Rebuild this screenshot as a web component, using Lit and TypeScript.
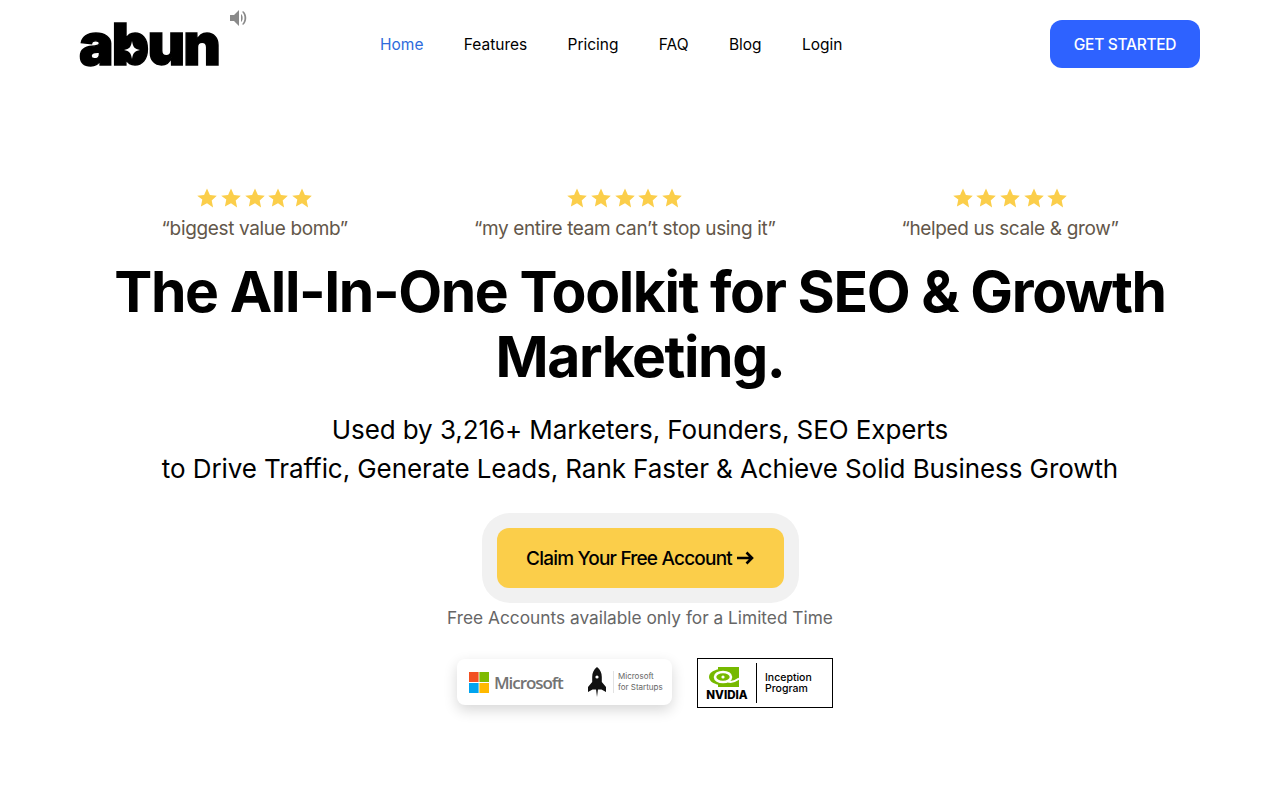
import { LitElement, css, html, svg } from 'lit';
import { customElement } from 'lit/decorators.js';

const quotes = ['“biggest value bomb”', '“my entire team can’t stop using it”', '“helped us scale & grow”'];
const links = ['Home', 'Features', 'Pricing', 'FAQ', 'Blog', 'Login'];

const star = svg`<path d="M10 .6l2.9 6.4 6.9.8-5.1 4.7 1.4 6.9L10 15.2l-6.1 3.2 1.4-6.9L.2 7.8l6.9-.8z"/>`;

@customElement('app-root')
export class AppRoot extends LitElement {
  static override styles = css`
    :host {
      display: block;
      height: 800px;
      overflow: hidden;
      background: #fff;
      font-family: 'Inter', sans-serif;
      color: #000;
    }

    .header {
      height: 88px;
      padding: 0 80px;
      display: flex;
      align-items: center;
      box-sizing: border-box;
    }

    .logo {
      width: 300px;
      height: 88px;
      position: relative;
      display: flex;
    }

    .logo-text {
      font-weight: 900;
      font-size: 58px;
      line-height: 88px;
      letter-spacing: -1.8px;
      margin-left: -1px;
      -webkit-text-stroke: 1.4px #000;
      color: #000;
    }

    .counter {
      position: absolute;
      left: 38px;
      top: 36px;
      width: 28px;
      height: 28px;
    }

    .sound {
      position: absolute;
      left: 149px;
      top: 8px;
      width: 20px;
      height: 20px;
      fill: #8a8a8a;
    }

    .nav {
      display: flex;
      gap: 40.3px;
      font-size: 15.5px;
    }

    .nav a.active {
      color: #2e6bdc;
    }

    .cta {
      margin-left: auto;
      width: 150px;
      height: 48px;
      border-radius: 12px;
      background: #2e62ff;
      color: #fff;
      font-size: 15.5px;
      font-weight: 500;
      letter-spacing: -0.3px;
      display: flex;
      align-items: center;
      justify-content: center;
    }

    .hero {
      display: flex;
      flex-direction: column;
      align-items: center;
      padding-top: 100px;
    }

    .quotes {
      display: flex;
      justify-content: center;
      gap: 126px;
    }

    .quote {
      display: flex;
      flex-direction: column;
      align-items: center;
      gap: 9px;
      font-size: 19px;
      line-height: 24px;
      letter-spacing: -0.35px;
      color: #63574a;
    }

    .stars {
      display: flex;
      gap: 3.7px;
      height: 20px;
    }

    .stars svg {
      width: 20px;
      height: 20px;
      fill: #fbce4a;
    }

    h1 {
      margin: 18px 0 0;
      font-size: 57px;
      line-height: 65px;
      font-weight: 700;
      letter-spacing: -1.4px;
      text-align: center;
      width: 1120px;
    }

    .sub {
      margin: 21px 0 0;
      font-size: 26px;
      line-height: 39px;
      letter-spacing: -0.08px;
      text-align: center;
    }

    .claim-wrap {
      margin-top: 25px;
      padding: 15px;
      border-radius: 28px;
      background: #f1f1f1;
    }

    .claim {
      width: 287px;
      height: 60px;
      border-radius: 12px;
      background: #fbce4a;
      display: flex;
      align-items: center;
      justify-content: center;
      gap: 5px;
      font-size: 19px;
      font-weight: 500;
      letter-spacing: -0.8px;
    }

    .limited {
      margin-top: 3px;
      font-size: 17.3px;
      line-height: 24px;
      color: #666;
    }

    .badges {
      margin: 28px 0 0 10px;
      display: flex;
      align-items: center;
      gap: 25px;
    }

    .ms {
      width: 215px;
      height: 46px;
      margin-bottom: 2px;
      border-radius: 8px;
      background: #fff;
      box-shadow: 0 5px 14px rgba(0, 0, 0, 0.16);
      display: flex;
      align-items: center;
      padding-left: 12px;
      box-sizing: border-box;
    }

    .ms-name {
      margin-left: 5px;
      width: 69px;
      font-size: 17px;
      font-weight: 600;
      color: #737373;
      letter-spacing: -1.05px;
      font-family: 'Open Sans', sans-serif;
    }

    .ms-sub {
      font-size: 8px;
      line-height: 11px;
      color: #666;
      margin-left: 7px;
      padding-left: 4px;
      border-left: 1px solid #e2e2e2;
      white-space: nowrap;
    }

    .rocket {
      margin-left: 25px;
    }

    .nvidia {
      width: 136px;
      height: 50px;
      border: 1px solid #000;
      box-sizing: border-box;
      display: flex;
      align-items: center;
    }

    .nv-mark {
      width: 58px;
      padding-top: 2px;
      display: flex;
      flex-direction: column;
      align-items: center;
      gap: 3px;
    }

    .nv-logo {
      margin-right: 6px;
    }

    .nv-name {
      font-size: 11.5px;
      line-height: 11px;
      font-weight: 800;
    }

    .nv-line {
      width: 1px;
      height: 40px;
      background: #000;
    }

    .nv-text {
      margin-left: 8px;
      font-size: 10.5px;
      line-height: 11px;
      font-weight: 500;
    }
  `;

  override render() {
    return html`
      <div class="header">
        <div class="logo">
          <span class="logo-text">abun</span>
          <svg class="counter" viewBox="0 0 28 28">
            <circle cx="14" cy="14" r="12" fill="#000" />
            <path d="M14 5c1 6 2.500 8 8 9-5.500 1-7 3-8 9-1-6-2.500-8-8-9 5.500-1 7-3 8-9z" fill="#fff" />
          </svg>
          <svg class="sound" viewBox="0 0 20 20">
            <path d="M1 7h4l5-5v16l-5-5H1z" />
            <path d="M12 6c2.200 1.800 2.200 6.200 0 8z" />
            <path d="M14 3c4.400 3 4.400 11 0 14l-.8-1c3-3 3-9 0-12z" />
          </svg>
        </div>
        <div class="nav">
          ${links.map((l, i) => html`<a class=${i === 0 ? 'active' : ''}>${l}</a>`)}
        </div>
        <div class="cta">GET STARTED</div>
      </div>

      <div class="hero">
        <div class="quotes">
          ${quotes.map(
            (q) => html`
              <div class="quote">
                <div class="stars">
                  ${[0, 1, 2, 3, 4].map(() => html`<svg viewBox="0 0 20 20">${star}</svg>`)}
                </div>
                <div>${q}</div>
              </div>
            `
          )}
        </div>
        <h1>The All-In-One Toolkit for SEO &amp; Growth Marketing.</h1>
        <p class="sub">
          Used by 3,216+ Marketers, Founders, SEO Experts<br />
          to Drive Traffic, Generate Leads, Rank Faster &amp; Achieve Solid Business Growth
        </p>
        <div class="claim-wrap">
          <div class="claim">
            Claim Your Free Account
            <svg width="17" height="14" viewBox="0 0 17 14" fill="none" stroke="#000" stroke-width="2.6">
              <path d="M0 7h15M9.500 1.500L15 7l-5.500 5.500" />
            </svg>
          </div>
        </div>
        <div class="limited">Free Accounts available only for a Limited Time</div>
        <div class="badges">
          <div class="ms">
            <svg width="20" height="21" viewBox="0 0 20 21">
              <rect width="9.600" height="10" fill="#f25022" />
              <rect x="10.400" width="9.600" height="10" fill="#7fba00" />
              <rect y="11" width="9.600" height="10" fill="#00a4ef" />
              <rect x="10.400" y="11" width="9.600" height="10" fill="#ffb900" />
            </svg>
            <span class="ms-name">Microsoft</span>
            <svg class="rocket" width="18" height="30" viewBox="0 0 18 30">
              <path d="M9 0c3.300 2.500 4.800 6 4.800 10v5l4.200 5v5l-4.500-2.500h-9L0 25v-5l4.200-5v-5C4.200 6 5.700 2.500 9 0z" fill="#111" />
              <path d="M8 22h2l-1 8z" fill="#111" />
              <circle cx="9" cy="10" r="1.600" fill="#fff" />
            </svg>
            <span class="ms-sub">Microsoft<br />for Startups</span>
          </div>
          <div class="nvidia">
            <div class="nv-mark">
              <svg class="nv-logo" width="30" height="20" viewBox="0 0 30 20">
                <rect x="9" width="21" height="20" fill="#76b900" />
                <ellipse cx="13" cy="10" rx="13" ry="8" fill="#76b900" />
                <ellipse cx="14" cy="10" rx="8" ry="5" fill="none" stroke="#fff" stroke-width="2.600" />
                <circle cx="14" cy="10" r="1.600" fill="#fff" />
                <path d="M19 14.500c3 1 7 0 11-3" fill="none" stroke="#fff" stroke-width="2" />
              </svg>
              <span class="nv-name">NVIDIA</span>
            </div>
            <div class="nv-line"></div>
            <div class="nv-text">Inception<br />Program</div>
          </div>
        </div>
      </div>
    `;
  }
}
